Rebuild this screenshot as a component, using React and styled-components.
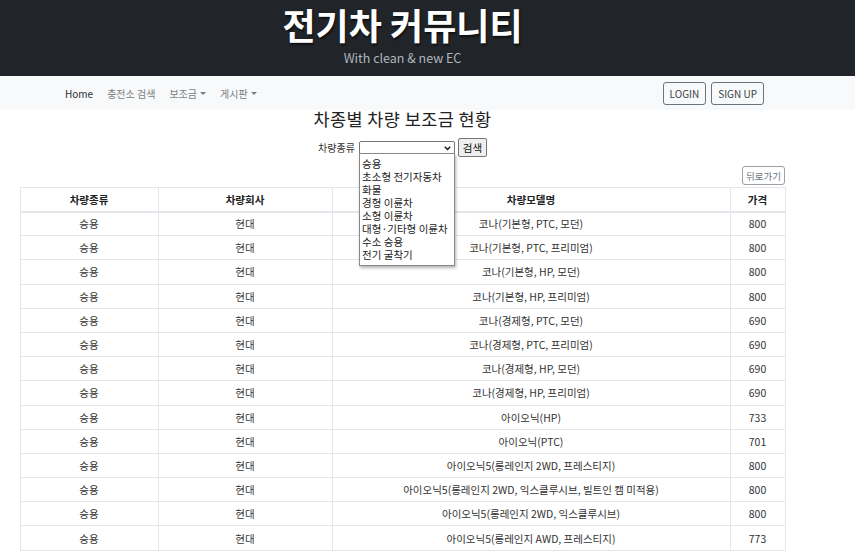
import React from "react";
import styled, { createGlobalStyle } from "styled-components";

const Global = createGlobalStyle`
  html, body { margin: 0; padding: 0; overflow: hidden; background: #fff; }
  body { font-family: "Noto Sans CJK KR", "Noto Sans", sans-serif; color: #212529; }
  * { box-sizing: border-box; }
`;

const Header = styled.header`
  background: #212529;
  height: 76px;
  width: 805px;
  display: flex;
  flex-direction: column;
  align-items: center;
  box-shadow: 50px 0 0 #212529;
`;

const Title = styled.h1`
  margin: 0;
  margin-top: -2px;
  font-size: 36px;
  line-height: 52px;
  font-weight: 700;
  color: #fff;
  text-shadow: 1px 2px 2px rgba(0, 0, 0, 0.6);
`;

const Subtitle = styled.p`
  margin: 0;
  font-size: 12.5px;
  line-height: 16px;
  color: #adb5bd;
`;

const NavBar = styled.nav`
  background: #f8f9fa;
  height: 34px;
  display: flex;
  align-items: center;
  padding: 0 91px 0 65px;
`;

const NavLinks = styled.div`
  display: flex;
  align-items: center;
  gap: 14px;
  flex: 1;
`;

const NavLink = styled.span`
  font-size: 10px;
  color: ${(p) => (p.$active ? "#2b2f33" : "#7a7d80")};
  display: inline-flex;
  align-items: center;
  gap: 2px;
`;

const Caret = styled.span`
  width: 0;
  height: 0;
  border-left: 3px solid transparent;
  border-right: 3px solid transparent;
  border-top: 3.5px solid currentColor;
  margin-left: 1px;
`;

const NavButtons = styled.div`
  display: flex;
  gap: 5px;
`;

const OutlineButton = styled.button`
  font-family: inherit;
  height: 23px;
  padding: 0 6px;
  font-size: 10px;
  color: #3a3f44;
  background: transparent;
  border: 1px solid #6c757d;
  border-radius: 3px;
`;

const Main = styled.main`
  width: 805px;
  display: flex;
  flex-direction: column;
  align-items: center;
`;

const PageTitle = styled.h2`
  margin: 0;
  margin-top: -1px;
  font-size: 17.5px;
  line-height: 20px;
  font-weight: 400;
  color: #222;
  letter-spacing: 0.4px;
`;

const SearchForm = styled.form`
  position: relative;
  display: flex;
  align-items: center;
  margin-top: 9px;
  height: 19px;
`;

const Label = styled.span`
  font-size: 10px;
  color: #333;
  margin-right: 4px;
`;

const SelectBox = styled.div`
  position: relative;
  width: 96px;
  height: 14px;
  border: 1px solid #767676;
  border-radius: 2px;
  background: #fff;
  display: flex;
  align-items: center;
  justify-content: flex-end;
  padding-right: 3px;
  margin-top: 1px;
`;

const Chevron = styled.svg`
  width: 7px;
  height: 5px;
`;

const SearchButton = styled.button`
  font-family: inherit;
  margin-left: 3px;
  height: 19px;
  width: 29px;
  padding: 0;
  font-size: 10.5px;
  color: #111;
  background: #efefef;
  border: 1px solid #767676;
  border-radius: 2px;
`;

const Dropdown = styled.ul`
  position: absolute;
  left: 41px;
  top: 15px;
  width: 96px;
  margin: 0;
  padding: 3px 0 4px 2px;
  list-style: none;
  background: #fff;
  border: 1px solid #8a8a8a;
  box-shadow: 1px 2px 3px rgba(0, 0, 0, 0.3);
  z-index: 10;
`;

const Option = styled.li`
  font-size: 10.5px;
  line-height: 13px;
  height: 13px;
  color: #222;
  white-space: nowrap;
`;

const ToolRow = styled.div`
  width: 765px;
  display: flex;
  justify-content: flex-end;
  margin-top: 9px;
`;

const BackButton = styled.button`
  font-family: inherit;
  height: 19px;
  width: 43px;
  padding: 0;
  font-size: 9.5px;
  color: #6c757d;
  background: #fff;
  border: 1px solid #9aa0a6;
  border-radius: 3px;
`;

const Table = styled.table`
  width: 765px;
  margin-top: 2px;
  border-collapse: collapse;
  table-layout: fixed;
`;

const Th = styled.th`
  height: 24px;
  font-size: 10.5px;
  font-weight: 700;
  color: #222;
  border: 1px solid #e3e6ea;
  border-bottom: 2px solid #e3e6ea;
  text-align: center;
  padding: 0;
`;

const Td = styled.td`
  height: 24.2px;
  font-size: 10.5px;
  color: #333;
  border: 1px solid #e3e6ea;
  text-align: center;
  padding: 0;
  white-space: nowrap;
`;

const options = [
  "승용",
  "초소형 전기자동차",
  "화물",
  "경형 이륜차",
  "소형 이륜차",
  "대형·기타형 이륜차",
  "수소 승용",
  "전기 굴착기",
];

const rows = [
  ["코나(기본형, PTC, 모던)", 800],
  ["코나(기본형, PTC, 프리미엄)", 800],
  ["코나(기본형, HP, 모던)", 800],
  ["코나(기본형, HP, 프리미엄)", 800],
  ["코나(경제형, PTC, 모던)", 690],
  ["코나(경제형, PTC, 프리미엄)", 690],
  ["코나(경제형, HP, 모던)", 690],
  ["코나(경제형, HP, 프리미엄)", 690],
  ["아이오닉(HP)", 733],
  ["아이오닉(PTC)", 701],
  ["아이오닉5(롱레인지 2WD, 프레스티지)", 800],
  ["아이오닉5(롱레인지 2WD, 익스클루시브, 빌트인 캠 미적용)", 800],
  ["아이오닉5(롱레인지 2WD, 익스클루시브)", 800],
  ["아이오닉5(롱레인지 AWD, 프레스티지)", 773],
  ["아이오닉5(롱레인지 AWD, 익스클루시브)", 773],
];

export default function App() {
  return (
    <>
      <Global />
      <Header>
        <Title>전기차 커뮤니티</Title>
        <Subtitle>With clean &amp; new EC</Subtitle>
      </Header>
      <NavBar>
        <NavLinks>
          <NavLink $active>Home</NavLink>
          <NavLink>충전소 검색</NavLink>
          <NavLink>
            보조금<Caret />
          </NavLink>
          <NavLink>
            게시판<Caret />
          </NavLink>
        </NavLinks>
        <NavButtons>
          <OutlineButton>LOGIN</OutlineButton>
          <OutlineButton>SIGN UP</OutlineButton>
        </NavButtons>
      </NavBar>
      <Main>
        <PageTitle>차종별 차량 보조금 현황</PageTitle>
        <SearchForm onSubmit={(e) => e.preventDefault()}>
          <Label>차량종류</Label>
          <SelectBox>
            <Chevron viewBox="0 0 7 5">
              <path d="M0.8 0.8 L3.5 3.6 L6.2 0.8" fill="none" stroke="#111" strokeWidth="1.4" />
            </Chevron>
          </SelectBox>
          <SearchButton type="submit">검색</SearchButton>
          <Dropdown>
            {options.map((o) => (
              <Option key={o}>{o}</Option>
            ))}
          </Dropdown>
        </SearchForm>
        <ToolRow>
          <BackButton>뒤로가기</BackButton>
        </ToolRow>
        <Table>
          <colgroup>
            <col style={{ width: 138 }} />
            <col style={{ width: 174 }} />
            <col style={{ width: 398 }} />
            <col style={{ width: 55 }} />
          </colgroup>
          <thead>
            <tr>
              <Th>차량종류</Th>
              <Th>차량회사</Th>
              <Th>차량모델명</Th>
              <Th>가격</Th>
            </tr>
          </thead>
          <tbody>
            {rows.map(([model, price], i) => (
              <tr key={i}>
                <Td>승용</Td>
                <Td>현대</Td>
                <Td>{model}</Td>
                <Td>{price}</Td>
              </tr>
            ))}
          </tbody>
        </Table>
      </Main>
    </>
  );
}
